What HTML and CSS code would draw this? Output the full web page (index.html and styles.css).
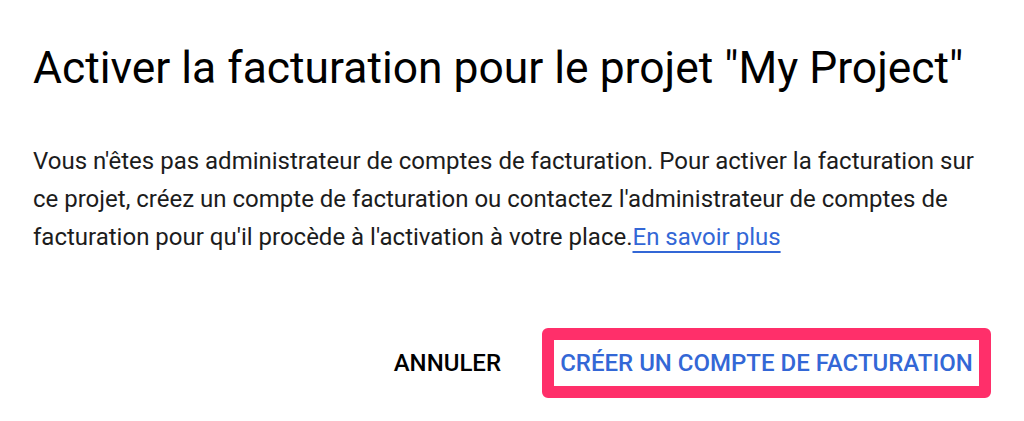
FILE: index.html
```html
<!DOCTYPE html>
<html lang="fr">
<head>
<meta charset="utf-8">
<title>Activer la facturation</title>
<link rel="stylesheet" href="styles.css">
</head>
<body>
<div class="dialog">
  <h1 class="title">Activer la facturation pour le projet "My Project"</h1>
  <p class="body">Vous n'êtes pas administrateur de comptes de facturation. Pour activer la facturation sur ce projet, créez un compte de facturation ou contactez l'administrateur de comptes de facturation pour qu'il procède à l'activation à votre place.<a class="link" href="#">En savoir plus</a></p>
  <div class="actions">
    <button class="btn btn-cancel">ANNULER</button>
    <div class="highlight">
      <button class="btn btn-primary">CRÉER UN COMPTE DE FACTURATION</button>
    </div>
  </div>
</div>
</body>
</html>
```
FILE: styles.css
```css
html, body {
  margin: 0;
  padding: 0;
  background: #ffffff;
}
body {
  font-family: Roboto, "Liberation Sans", sans-serif;
  color: #1c1c1c;
}
.dialog {
  width: 1024px;
  height: 421px;
  box-sizing: border-box;
  padding: 40px 33px 0 33px;
}
.title {
  margin: 0;
  font-size: 44.4px;
  font-weight: 400;
  line-height: 56px;
  color: #000000;
  white-space: nowrap;
}
.body {
  margin: 46px 0 0 0;
  font-size: 24px;
  line-height: 38px;
  color: #1c1c1c;
}
.link {
  color: #3367d6;
  text-decoration: underline;
  text-decoration-thickness: 2px;
  text-underline-offset: 6px;
}
.actions {
  display: flex;
  justify-content: flex-end;
  align-items: center;
  margin-top: 72px;
  gap: 41px;
}
.btn {
  font-family: Roboto, "Liberation Sans", sans-serif;
  font-size: 24px;
  font-weight: 500;
  border: none;
  background: transparent;
  padding: 0;
  cursor: pointer;
  white-space: nowrap;
}
.btn-cancel {
  color: #000000;
}
.highlight {
  border: 12px solid #ff2f6a;
  border-radius: 6px;
  width: 425px;
  height: 46px;
  display: flex;
  align-items: center;
  justify-content: center;
  background: #fff;
}
.btn-primary {
  color: #3367d6;
}
```
